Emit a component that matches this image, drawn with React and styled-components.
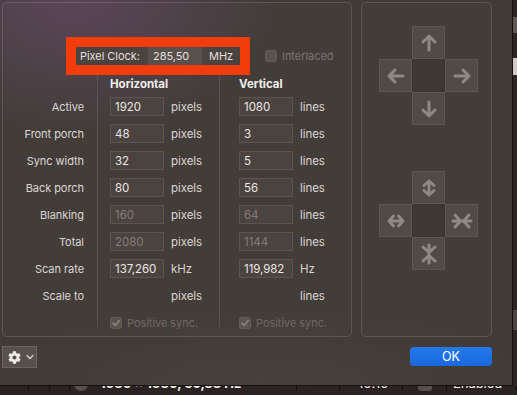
import React from "react";
import styled, { createGlobalStyle } from "styled-components";
import { FaCog } from "react-icons/fa";

const Global = createGlobalStyle`
  html, body { margin: 0; padding: 0; background: #221c1a; }
  * { box-sizing: border-box; }
`;

const Screen = styled.div`
  width: 517px;
  height: 395px;
  overflow: hidden;
  display: flex;
  flex-direction: column;
  background: #231d1b;
  font-family: Inter, "Noto Sans", sans-serif;
  font-size: 11px;
  letter-spacing: -0.05px;
  color: #dcd6d3;
`;

const TopArea = styled.div`
  display: flex;
  height: 386px;
`;

const Window = styled.div`
  width: 513px;
  height: 386px;
  flex: none;
  display: flex;
  flex-direction: column;
  padding: 2px 0 0 2px;
  border-right: 1px solid #141010;
  border-bottom: 1px solid #141010;
  background:
    radial-gradient(ellipse 200px 130px at 75px 0px, rgba(125, 80, 135, 0.4), transparent 100%),
    radial-gradient(ellipse 300px 80px at 260px 385px, rgba(255, 255, 255, 0.03), transparent 100%),
    #413a37;
`;

const SideStrip = styled.div`
  flex: 1;
  display: flex;
  flex-direction: column;
  background: #2b2523;
`;

const StripBlock = styled.div`
  height: ${(p) => p.$h}px;
  margin-top: ${(p) => p.$mt}px;
  background: ${(p) => p.$c};
`;

const Panels = styled.div`
  display: flex;
  gap: 9px;
  height: 335px;
`;

const GroupBox = styled.div`
  width: ${(p) => p.$w}px;
  height: 335px;
  border: 1px solid rgba(255, 255, 255, 0.13);
  border-radius: 5px;
  background: rgba(255, 255, 255, 0.015);
  display: flex;
  flex-direction: column;
`;

const ClockRow = styled.div`
  display: flex;
  align-items: center;
  padding: 34px 0 0 63px;
  gap: 15px;
`;

const Highlight = styled.div`
  border: 10px solid #f23c0a;
  display: flex;
  height: 38px;
  background: #4a4441;
`;

const ClockLabel = styled.div`
  display: flex;
  align-items: center;
  padding: 0 0 0 ${(p) => p.$pl}px;
  width: ${(p) => p.$w}px;
  color: #e4dfdc;
  background: ${(p) => (p.$field ? "#57504d" : "transparent")};
`;

const CheckBox = styled.span`
  width: 12px;
  height: 12px;
  border-radius: 3px;
  flex: none;
  display: inline-flex;
  align-items: center;
  justify-content: center;
  background: #5a5350;
  border: 1px solid rgba(255, 255, 255, 0.06);
`;

const CheckLabel = styled.label`
  display: flex;
  align-items: center;
  gap: 5px;
  color: ${(p) => (p.$dim ? "#6f6865" : "#7b7471")};
`;

const ParamGrid = styled.div`
  display: grid;
  grid-template-columns: 94px 122px 1fr;
  grid-auto-rows: 27px;
  grid-template-rows: 18px;
`;

const LabelCell = styled.div`
  display: flex;
  align-items: center;
  justify-content: flex-end;
  padding-right: 13px;
  color: #dcd6d3;
`;

const ValueCell = styled.div`
  display: flex;
  align-items: ${(p) => (p.$top ? "flex-start" : "center")};
  padding-top: ${(p) => (p.$top ? 7 : 0)}px;
  gap: 7px;
  padding-left: ${(p) => p.$pl}px;
  background-image: linear-gradient(to right, rgba(255, 255, 255, 0.1) 1px, transparent 1px);
  background-repeat: no-repeat;
  background-size: ${(p) => (p.$rule ? `1px ${p.$rule}px` : "1px 100%")};
`;

const Header = styled.div`
  font-weight: 700;
  color: #f2eeec;
  font-size: 11.5px;
  letter-spacing: 0;
`;

const Field = styled.div`
  width: 54px;
  height: 19px;
  flex: none;
  display: flex;
  align-items: center;
  padding-left: 4px;
  background: #4a4340;
  border: 1px solid #5b5451;
  color: ${(p) => (p.$disabled ? "#847d7a" : "#ebe7e4")};
  font-size: 11.5px;
`;

const Unit = styled.span`
  color: #dad4d1;
  font-size: 11.5px;
`;

const ArrowBox = styled.div`
  display: flex;
  flex-direction: column;
  gap: 46px;
  padding: 23px 0 0 17px;
`;

const Pad = styled.div`
  display: grid;
  grid-template-columns: repeat(3, 33px);
  grid-template-rows: repeat(3, 33px);
`;

const PadCell = styled.div`
  grid-column: ${(p) => p.$c};
  grid-row: ${(p) => p.$r};
  display: flex;
  align-items: center;
  justify-content: center;
  background: ${(p) => (p.$center ? "rgba(0,0,0,0.07)" : "rgba(255,255,255,0.075)")};
  border: 1px solid ${(p) => (p.$center ? "rgba(0,0,0,0.04)" : "rgba(255,255,255,0.07)")};
`;

const Footer = styled.div`
  display: flex;
  justify-content: space-between;
  align-items: flex-start;
  padding: 9px 20px 0 0;
`;

const GearButton = styled.button`
  width: 35px;
  height: 22px;
  display: flex;
  align-items: center;
  gap: 5px;
  padding: 0 0 0 5px;
  background: #57514e;
  border: 1px solid #6a6360;
  color: #ece8e6;
`;

const OkButton = styled.button`
  width: 82px;
  height: 19px;
  margin-top: 1px;
  border: none;
  border-radius: 4px;
  background: linear-gradient(#2378ea, #1a69dc);
  color: #fff;
  font-family: Inter, "Noto Sans", sans-serif;
  font-size: 12.5px;
  padding: 0;
`;

const TableRow = styled.div`
  height: 9px;
  overflow: hidden;
  display: flex;
  background: #2a2321;
`;

const TCell = styled.div`
  width: ${(p) => p.$w}px;
  flex: none;
  display: flex;
  align-items: flex-end;
  padding-left: ${(p) => p.$pl || 0}px;
  border-right: 1px solid #141010;
  gap: 12px;
  color: #f4f0ee;
  font-weight: ${(p) => (p.$bold ? 700 : 400)};
  font-size: 13px;
  line-height: 15px;
  height: 15px;
  margin-top: -10px;
`;

const Dot = styled.span`
  width: ${(p) => p.$w || 14}px;
  height: 14px;
  border-radius: ${(p) => (p.$round ? "50%" : "3px")};
  background: #55504d;
  flex: none;
`;

const stroke = { fill: "none", stroke: "#8f8885", strokeWidth: 3, strokeLinecap: "round", strokeLinejoin: "round" };

const Arrow = ({ rot }) => (
  <svg width="20" height="20" viewBox="0 0 20 20" style={{ transform: `rotate(${rot}deg)` }}>
    <path d="M10 3 L10 17 M4 9 L10 3 L16 9" {...stroke} />
  </svg>
);

const DoubleArrow = ({ rot }) => (
  <svg width="20" height="20" viewBox="0 0 20 20" style={{ transform: `rotate(${rot}deg)` }}>
    <path d="M10 3 L10 17 M5 7.5 L10 3 L15 7.5 M5 12.5 L10 17 L15 12.5" {...stroke} />
  </svg>
);

const Inward = ({ rot }) => (
  <svg width="22" height="22" viewBox="0 0 22 22" style={{ transform: `rotate(${rot}deg)` }}>
    <path d="M2 11 L20 11 M4 5 L9.5 11 L4 17 M18 5 L12.5 11 L18 17" {...stroke} />
  </svg>
);

const Check = () => (
  <svg width="10" height="10" viewBox="0 0 10 10">
    <path d="M2 5.2 L4.2 7.5 L8.2 2.5" fill="none" stroke="#8a8380" strokeWidth="1.6" strokeLinecap="round" strokeLinejoin="round" />
  </svg>
);

const rows = [
  { label: "Active", h: "1920", hu: "pixels", v: "1080", vu: "lines" },
  { label: "Front porch", h: "48", hu: "pixels", v: "3", vu: "lines" },
  { label: "Sync width", h: "32", hu: "pixels", v: "5", vu: "lines" },
  { label: "Back porch", h: "80", hu: "pixels", v: "56", vu: "lines" },
  { label: "Blanking", h: "160", hu: "pixels", v: "64", vu: "lines", dis: true },
  { label: "Total", h: "2080", hu: "pixels", v: "1144", vu: "lines", dis: true },
  { label: "Scan rate", h: "137,260", hu: "kHz", v: "119,982", vu: "Hz" },
  { label: "Scale to", hu: "pixels", vu: "lines" },
];

const NoFieldSpacer = styled.span`
  width: 54px;
  flex: none;
`;

export default function App() {
  return (
    <>
      <Global />
      <Screen>
        <TopArea>
          <Window>
            <Panels>
              <GroupBox $w={350}>
                <ClockRow>
                  <Highlight>
                    <ClockLabel $w={72} $pl={4}>Pixel Clock:</ClockLabel>
                    <ClockLabel $w={54} $pl={5} $field>285,50</ClockLabel>
                    <ClockLabel $w={38} $pl={7}>MHz</ClockLabel>
                  </Highlight>
                  <CheckLabel>
                    <CheckBox />
                    Interlaced
                  </CheckLabel>
                </ClockRow>
                <ParamGrid>
                  <LabelCell />
                  <ValueCell $pl={13}><Header>Horizontal</Header></ValueCell>
                  <ValueCell $pl={20}><Header>Vertical</Header></ValueCell>
                  {rows.map((r) => (
                    <React.Fragment key={r.label}>
                      <LabelCell>{r.label}</LabelCell>
                      <ValueCell $pl={13}>
                        {r.h ? <Field $disabled={r.dis}>{r.h}</Field> : <NoFieldSpacer />}
                        <Unit>{r.hu}</Unit>
                      </ValueCell>
                      <ValueCell $pl={20}>
                        {r.v ? <Field $disabled={r.dis}>{r.v}</Field> : <NoFieldSpacer />}
                        <Unit>{r.vu}</Unit>
                      </ValueCell>
                    </React.Fragment>
                  ))}
                  <LabelCell />
                  <ValueCell $pl={13} $rule={18} $top>
                    <CheckLabel $dim><CheckBox><Check /></CheckBox>Positive sync.</CheckLabel>
                  </ValueCell>
                  <ValueCell $pl={20} $rule={18} $top>
                    <CheckLabel $dim><CheckBox><Check /></CheckBox>Positive sync.</CheckLabel>
                  </ValueCell>
                </ParamGrid>
              </GroupBox>
              <GroupBox $w={131}>
                <ArrowBox>
                  <Pad>
                    <PadCell $c={2} $r={1}><Arrow rot={0} /></PadCell>
                    <PadCell $c={1} $r={2}><Arrow rot={-90} /></PadCell>
                    <PadCell $c={2} $r={2} $center />
                    <PadCell $c={3} $r={2}><Arrow rot={90} /></PadCell>
                    <PadCell $c={2} $r={3}><Arrow rot={180} /></PadCell>
                  </Pad>
                  <Pad>
                    <PadCell $c={2} $r={1}><DoubleArrow rot={0} /></PadCell>
                    <PadCell $c={1} $r={2}><DoubleArrow rot={90} /></PadCell>
                    <PadCell $c={2} $r={2} $center />
                    <PadCell $c={3} $r={2}><Inward rot={0} /></PadCell>
                    <PadCell $c={2} $r={3}><Inward rot={90} /></PadCell>
                  </Pad>
                </ArrowBox>
              </GroupBox>
            </Panels>
            <Footer>
              <GearButton>
                <FaCog size={13} />
                <svg width="8" height="6" viewBox="0 0 8 6">
                  <path d="M1 1.5 L4 4.5 L7 1.5" fill="none" stroke="#d8d2cf" strokeWidth="1.3" strokeLinecap="round" strokeLinejoin="round" />
                </svg>
              </GearButton>
              <OkButton>OK</OkButton>
            </Footer>
          </Window>
          <SideStrip>
            <StripBlock $mt={17} $h={16} $c="#5e5955" />
            <StripBlock $mt={25} $h={17} $c="#cfcac7" />
            <StripBlock $mt={235} $h={20} $c="#4a4542" />
          </SideStrip>
        </TopArea>
        <TableRow>
          <TCell $w={29} />
          <TCell $w={21} />
          <TCell $w={20} />
          <TCell $w={227} $pl={4} $bold>
            <Dot $round />
            <span>1080 × 1080, 59,88 Hz</span>
          </TCell>
          <TCell $w={43} />
          <TCell $w={63} $pl={18}>10:10</TCell>
          <TCell $w={44} $pl={15}><Dot /></TCell>
          <TCell $w={70} $pl={6}>Enabled</TCell>
        </TableRow>
      </Screen>
    </>
  );
}
